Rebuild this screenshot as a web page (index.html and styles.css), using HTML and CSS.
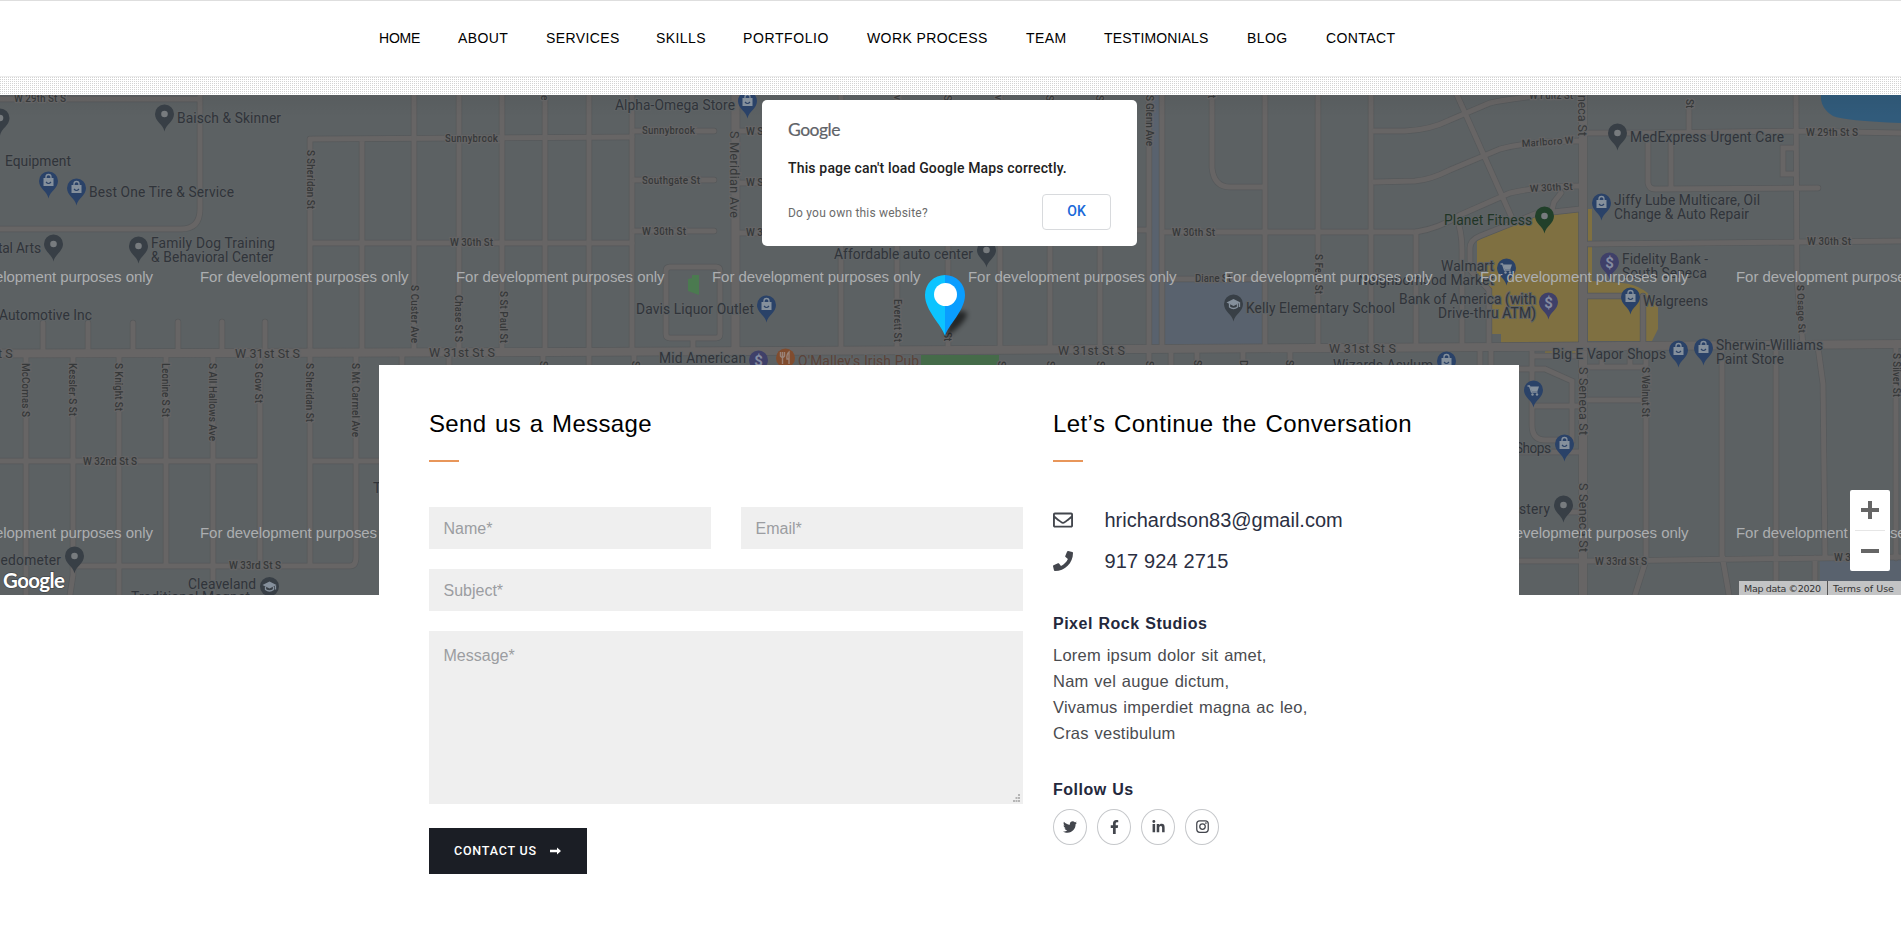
FILE: index.html
```html
<!DOCTYPE html>
<html lang="en">
<head>
<meta charset="utf-8">
<title>Contact</title>
<link rel="stylesheet" href="styles.css">
</head>
<body>
<header class="header">
  <nav class="nav">
    <a class="tight">HOME</a><a>ABOUT</a><a>SERVICES</a><a>SKILLS</a><a class="wide">PORTFOLIO</a><a>WORK PROCESS</a><a>TEAM</a><a class="snug">TESTIMONIALS</a><a>BLOG</a><a>CONTACT</a>
  </nav>
</header>
<div class="dots"></div>
<section class="map">
<svg class="map-canvas" viewBox="0 95 1901 500" width="1901" height="500">
  <defs>
    <path id="pin" d="M0 17.5C-1.2 10.500-9.500 7.500-9.500 0A9.500 9.500 0 0 1 9.500 0C9.500 7.500 1.200 10.500 0 17.500Z"/>
    <g id="dot"><use href="#pin"/><circle r="3.300" class="hole"/></g>
    <g id="bag"><use href="#pin"/><path class="glyph" d="M-5-3H5V5H-5Z"/><path class="gline" d="M-2.500-3V-4A2.500 2.500 0 0 1 2.500-4V-3"/><path class="smile" d="M-2.500 1Q0 4 2.500 1"/></g>
    <g id="cart"><use href="#pin"/><path class="gline" d="M-6-4H-4L-2 2H4"/><path class="glyph" d="M-3.500-3.500H5.500L4 1H-2Z"/><circle class="glyph" cx="-1" cy="4.500" r="1.200"/><circle class="glyph" cx="3.500" cy="4.500" r="1.200"/></g>
    <g id="bank"><use href="#pin"/><text class="dollar" x="0" y="5.500">$</text></g>
    <g id="cap"><path class="glyph" d="M0-5L7-1.500 0 2-7-1.500Z"/><path class="gline" d="M-4 0V3Q0 6 4 3V0M6-1V3"/></g>
    <linearGradient id="shade" x1="0" x2="0" y1="0" y2="1"><stop offset="0" stop-color="#000" stop-opacity=".05"/><stop offset="1" stop-color="#000" stop-opacity="0"/></linearGradient>
    <filter id="soft" x="-50%" y="-50%" width="200%" height="200%"><feGaussianBlur stdDeviation="2.500"/></filter>
    <g id="lines">
      <path d="M0 99H200M200 95V209Q200 229 181 229H0M312 139L632 137M310 139V350M362 140V352M310 243H632M43 323V352M88 323V352M133 323V352M178 322V352M222 322V352M265 322V352"/>
      <path d="M414 95V350M459 95V350M502 95V350M545 95V350M589 95V350M632 95V350M841 95V350M897 95V350M948 95V350M1000 95V350M1050 95V350M1100 95V350M1149 95V350M1162 95V350M1050 230H1149"/>
      <path d="M634 131H714M634 180H714M634 231H714M738 131H770M738 183H770M738 233H770M670 267H716Q720 267 720 271V334Q720 338 716 338H670Q666 338 666 334V271Q666 267 670 267ZM693 338V350"/>
      <path d="M1212 95V168Q1214 187 1230 187H1264M1265 95V346M1318 95V346M1371 95V346M1416 232V346M1165 279H1265M1165 232H1416"/>
      <path d="M1374 131H1405Q1430 130 1450 120L1490 103Q1510 98 1578 92M1374 182L1415 181Q1430 180 1450 170L1500 149Q1530 141 1580 141M1416 232Q1440 228 1460 215L1510 193Q1540 186 1580 186M1457 95L1511 216M1456 217Q1462 230 1462 250V346M1489 346V290L1470 270V248Q1470 240 1480 236L1535 214 1580 209M1552 210L1554 202 1561 193"/>
      <path d="M1583 133H1650L1797 131 1901 133M1689 105V131M1648 143V183Q1649 189 1655 189L1818 188M1671 143V188M1796 95L1797 280 1803 345M1796 148H1783V174H1796M1588 244L1797 242 1901 241M1587 296H1634M1643 296V345"/>
      <path d="M26 355V595M73 355V575L70 595M119 355V595M166 355V565M213 355V595M260 355V563M310 350V564M356 355V557Q356 566 350 566H75M0 461H257M311 461H379M402 352V365M449 352V365M543 352V365M589 352V365M634 352V365M1171 350V365M1197 350V365M1243 350V365M1290 350V365M1480 350V365M1491 350V365M1149 350V365"/>
      <path d="M1646 347V560L1635 595M1722 347V555L1729 595M1776 347V595M1818 347L1823 384 1825 558M1896 347V558M1500 561H1600L1901 557M1532 350V425Q1532 440 1545 440H1572V381L1545 369H1500M1532 406H1583M1588 400H1645M1588 367H1645M1519 452H1583M1815 558V595M1533 356H1583M1563 512H1583M1602 355V367M1630 355V367"/>
    </g>
    <g id="mains"><path d="M0 353.500L560 352 960 350 1500 347 1901 344M735.500 95V350M1583 95V595"/></g>
  </defs>
  <rect class="land" y="95" width="1901" height="500"/>
  <path class="school" d="M1165 279H1264V346H1165ZM1820 560H1901V595H1820ZM1149 95H1163V346H1149Z"/>
  <path class="park" d="M921 355H999V365H921Z"/>
  <path class="park bright" d="M688 279L692 278V275H699V295L688 291Z"/>
  <path class="water" d="M1821 95Q1820 108 1833 116 1845 121 1901 123V95Z"/>
  <path class="mall" d="M1477 240L1520 218 1555 212H1579V343H1501V334H1492V290H1484V277H1477ZM1588 209H1592V281L1622 283Q1646 285 1658 306V329L1652 341H1588ZM1545 351H1583V355H1545Z"/>
  <use href="#lines" class="edge"/><use href="#mains" class="edge big"/>
  <use href="#lines" class="road"/><use href="#mains" class="road big"/>
  <rect y="95" width="1901" height="22" fill="url(#shade)"/>

  <g class="st">
    <text x="14" y="102" textLength="52">W 29th St S</text><text x="445" y="142" textLength="53">Sunnybrook</text><text x="450" y="246" textLength="43">W 30th St</text>
    <text x="642" y="134" textLength="53">Sunnybrook</text><text x="642" y="184" textLength="58">Southgate St</text><text x="642" y="235" textLength="44">W 30th St</text>
    <text x="746" y="135">W S</text><text x="746" y="186">W S</text><text x="746" y="236">W 3</text>
    <text x="1172" y="236" textLength="43">W 30th St</text><text x="1195" y="282" textLength="36">Diane St</text>
    <text x="1529" y="99" textLength="44">W Fultz St</text><text transform="translate(1522 147) rotate(-4)" textLength="52">Marlboro W</text><text transform="translate(1530 192) rotate(-3)" textLength="43">W 30th St</text>
    <text x="1806" y="136" textLength="52">W 29th St S</text><text x="1807" y="245" textLength="44">W 30th St</text>
    <text x="83" y="465" textLength="54">W 32nd St S</text><text x="229" y="569" textLength="52">W 33rd St S</text><text x="1595" y="565" textLength="52">W 33rd St S</text><text x="1834" y="561">W 3</text>
    <text transform="translate(307 150) rotate(90)" textLength="59">S Sheridan St</text>
    <text transform="translate(411 285) rotate(90)" textLength="58">S Custer Ave</text><text transform="translate(455 295) rotate(90)" textLength="47">Chase St S</text><text transform="translate(500 291) rotate(90)" textLength="52">S St Paul St</text>
    <text transform="translate(541 95) rotate(90)">e</text><text transform="translate(894 299) rotate(90)" textLength="43">Everett St</text><text transform="translate(944 332) rotate(90)">St</text>
    <text transform="translate(1146 95) rotate(90)" textLength="51">S Glenn Ave</text><text transform="translate(1208 95) rotate(90)">t</text><text transform="translate(1315 254) rotate(90)" textLength="40">S Fern St</text>
    <text transform="translate(1686 99) rotate(90)">St</text><text transform="translate(1797 285) rotate(88)" textLength="48">S Osage St</text><text transform="translate(1893 353) rotate(90)" textLength="44">S Silver St</text>
    <text transform="translate(22 363) rotate(90)" textLength="54">McComas S</text><text transform="translate(69 363) rotate(90)" textLength="53">Kessler S St</text><text transform="translate(115 363) rotate(90)" textLength="48">S Knight St</text><text transform="translate(162 363) rotate(90)" textLength="54">Leonine S St</text><text transform="translate(209 363) rotate(90)" textLength="78">S All Hallows Ave</text><text transform="translate(255 363) rotate(90)" textLength="40">S Gow St</text><text transform="translate(306 363) rotate(90)" textLength="59">S Sheridan St</text><text transform="translate(352 363) rotate(90)" textLength="74">S Mt Carmel Ave</text>
    <text transform="translate(1642 367) rotate(90)" textLength="50">S Walnut St</text>
    <text transform="translate(894 95) rotate(90)">v</text><text transform="translate(944 95) rotate(90)">S</text><text transform="translate(995 95) rotate(90)">v</text><text transform="translate(1046 95) rotate(90)">S</text><text transform="translate(1096 95) rotate(90)">S</text>
    <text transform="translate(540 361) rotate(90)">S</text><text transform="translate(632 361) rotate(90)">S</text><text transform="translate(998 361) rotate(90)">S</text><text transform="translate(1047 361) rotate(90)">S</text><text transform="translate(1097 361) rotate(90)">S</text><text transform="translate(1146 361) rotate(90)">S</text><text transform="translate(1194 360) rotate(90)">S</text><text transform="translate(1240 360) rotate(90)">D</text><text transform="translate(1286 360) rotate(90)">S</text>
  </g>
  <g class="st av">
    <text x="-2" y="358">t S</text><text x="235" y="358" textLength="65">W 31st St S</text><text x="429" y="357" textLength="66">W 31st St S</text><text x="1058" y="355" textLength="67">W 31st St S</text><text x="1329" y="353" textLength="67">W 31st St S</text>
    <text transform="translate(730 131) rotate(90)" textLength="87">S Meridian Ave</text><text transform="translate(1578 95) rotate(90)" textLength="41">neca St</text><text transform="translate(1579 367) rotate(90)" textLength="68">S Seneca St</text><text transform="translate(1579 483) rotate(90)" textLength="69">S Seneca St</text>
  </g>
  <g class="poi">
    <text x="177" y="123" textLength="104">Baisch &amp; Skinner</text><text x="5" y="166" textLength="66">Equipment</text><text x="89" y="197" textLength="145">Best One Tire &amp; Service</text><text x="-2" y="253" textLength="43">tal Arts</text><text x="151" y="248" textLength="124">Family Dog Training</text><text x="151" y="262" textLength="122">&amp; Behavioral Center</text><text x="-1" y="320" textLength="93">Automotive Inc</text>
    <text x="615" y="110" textLength="120">Alpha-Omega Store</text><text x="636" y="314" textLength="118">Davis Liquor Outlet</text><text x="659" y="363" textLength="87">Mid American</text><text x="834" y="259" textLength="139">Affordable auto center</text><text x="1246" y="313" textLength="149">Kelly Elementary School</text><text x="1333" y="370" textLength="100">Wizards Asylum</text>
    <text x="1441" y="271" textLength="53">Walmart</text><text x="1358" y="285" textLength="136">Neighborhood Market</text><text x="1399" y="304" textLength="137">Bank of America (with</text><text x="1438" y="318" textLength="98">Drive-thru ATM)</text>
    <text x="1630" y="142" textLength="154">MedExpress Urgent Care</text><text x="1614" y="205" textLength="146">Jiffy Lube Multicare, Oil</text><text x="1614" y="219" textLength="135">Change &amp; Auto Repair</text><text x="1622" y="264" textLength="86">Fidelity Bank -</text><text x="1622" y="278" textLength="85">South Seneca</text><text x="1643" y="306" textLength="65">Walgreens</text><text x="1552" y="359" textLength="114">Big E Vapor Shops</text><text x="1716" y="350" textLength="107">Sherwin-Williams</text><text x="1716" y="364" textLength="68">Paint Store</text>
    <text x="1515" y="453" textLength="36">Shops</text><text x="1519" y="514" textLength="31">stery</text><text x="-7" y="565" textLength="68">eedometer</text><text x="188" y="589" textLength="68">Cleaveland</text><text x="131" y="602" textLength="119">Traditional Magnet</text><text x="373" y="493">T</text>
    <text x="798" y="366" textLength="121" class="food">O'Malley's Irish Pub</text><text x="1444" y="225" textLength="88" class="fit">Planet Fitness</text>
  </g>
  <g class="gray">
    <use href="#dot" x="0" y="118"/><use href="#dot" x="164.500" y="114"/><use href="#dot" x="53.500" y="244"/><use href="#dot" x="138.500" y="246"/><use href="#dot" x="986.500" y="250"/><use href="#dot" x="1617.500" y="133"/><use href="#dot" x="1563.500" y="505"/><use href="#dot" x="74.500" y="556"/>
    <use href="#pin" x="1233.500" y="304"/><use href="#cap" x="1233.500" y="304"/><circle cx="269.500" cy="586.500" r="9.500"/><use href="#cap" x="269.500" y="586.500"/>
  </g>
  <use href="#dot" class="green" x="1544.500" y="216"/>
  <g class="blue">
    <use href="#bag" x="48.500" y="181"/><use href="#bag" x="76.500" y="188"/><use href="#bag" x="747.500" y="101"/><use href="#bag" x="766.500" y="305"/><use href="#bag" x="1446.500" y="361"/><use href="#bag" x="1601.500" y="203"/><use href="#bag" x="1630.500" y="297"/><use href="#bag" x="1678.500" y="350"/><use href="#bag" x="1703.500" y="348"/><use href="#bag" x="1564.500" y="444"/><use href="#cart" x="1506.500" y="268"/><use href="#cart" x="1533.500" y="390"/>
  </g>
  <g class="violet"><use href="#bank" x="758.500" y="360"/><use href="#bank" x="1548.500" y="302"/><use href="#bank" x="1609.500" y="262"/></g>
  <circle class="orange" cx="785.500" cy="358" r="9.500"/><path class="fork" d="M780.500 352V356Q782.500 359 784.500 356V352M782.500 352V364M789 364V352Q786.500 354 787 359H789"/>

  <g class="mark">
    <text x="-55.500" y="282" textLength="208.500">For development purposes only</text><text x="200" y="282" textLength="208.500">For development purposes only</text><text x="456" y="282" textLength="208.500">For development purposes only</text><text x="712" y="282" textLength="208.500">For development purposes only</text><text x="968" y="282" textLength="208.500">For development purposes only</text><text x="1224" y="282" textLength="208.500">For development purposes only</text><text x="1480" y="282" textLength="208.500">For development purposes only</text><text x="1736" y="282" textLength="208.500">For development purposes only</text>
    <text x="-55.500" y="538" textLength="208.500">For development purposes only</text><text x="200" y="538" textLength="208.500">For development purposes only</text><text x="1480" y="538" textLength="208.500">For development purposes only</text><text x="1736" y="538" textLength="208.500">For development purposes only</text>
  </g>
  <path d="M945 335L952 316Q960 308 967 313 967 322 947 336Z" opacity=".6" filter="url(#soft)"/>
  <path fill="#0cc4ff" d="M945 336C942 325 925 311 925 295A20 20 0 0 1 945 275Z"/><path fill="#0a9dff" d="M945 336C948 325 965 311 965 295A20 20 0 0 0 945 275Z"/><circle cx="945.500" cy="294.500" r="11.500" fill="#fff"/>
  <text class="glogo" x="3" y="588" textLength="62">Google</text>
</svg>
<div class="dialog">
  <div class="dialog-logo">Google</div>
  <div class="dialog-title">This page can't load Google Maps correctly.</div>
  <div class="dialog-row"><span class="dialog-link">Do you own this website?</span><button class="ok">OK</button></div>
</div>
<div class="zoom"><span class="plus"></span><i></i><span class="minus"></span></div>
<div class="attribution"><span>Map data ©2020</span><span>Terms of Use</span></div>
</section>

<main class="card">
  <form class="form">
    <h2>Send us a Message</h2>
    <div class="fields">
      <input class="field" placeholder="Name*"><input class="field" placeholder="Email*">
      <input class="field full" placeholder="Subject*">
      <div class="area full"><textarea class="field" placeholder="Message*"></textarea>
        <svg class="grip" width="7" height="9" viewBox="0 0 7 9"><path d="M5 0h2v2H5zM2.500 3h2v2h-2zM5 3h2v2H5zM0 6h2v2H0zM2.500 6h2v2h-2zM5 6h2v2H5z" fill="#b5b5b5"/></svg></div>
    </div>
    <button class="submit" type="button">CONTACT US<svg width="11" height="8" viewBox="0 0 11 8"><path d="M0 2.800H7V.5L11 4 7 7.500V5.200H0Z" fill="#fff"/></svg></button>
  </form>
  <aside class="info">
    <h2 class="second">Let’s Continue the Conversation</h2>
    <div class="line"><svg width="20" height="20" viewBox="0 0 512 512"><path d="M464 64H48C21.500 64 0 85.500 0 112v288c0 26.500 21.500 48 48 48h416c26.500 0 48-21.500 48-48V112c0-26.500-21.500-48-48-48zm0 48v40.800c-22.400 18.300-58.200 46.700-134.600 106.500-16.800 13.200-50.200 45.100-73.400 44.700-23.200.4-56.600-31.500-73.400-44.700C106.200 199.500 70.400 171.100 48 152.800V112h416zM48 400V214.400c22.900 18.300 55.400 43.900 104.900 82.600 21.900 17.200 60.100 55.200 103.100 55 42.700.2 80.500-37.200 103.100-54.900 49.500-38.800 82-64.400 104.900-82.700V400H48z"/></svg><span>hrichardson83@gmail.com</span></div>
    <div class="line"><svg width="20" height="20" viewBox="0 0 512 512"><path d="M493.400 24.600l-104-24c-11.300-2.600-22.900 3.300-27.500 13.900l-48 112c-4.200 9.800-1.400 21.300 6.900 28l60.600 49.600c-36 76.700-98.900 140.500-177.200 177.200l-49.600-60.600c-6.800-8.300-18.200-11.100-28-6.900l-112 48C3.900 366.500-2 378.100.6 389.400l24 104C27.100 504.200 36.700 512 48 512c256.100 0 464-207.500 464-464 0-11.200-7.700-20.900-18.600-23.400z"/></svg><span class="tel">917 924 2715</span></div>
    <h3>Pixel Rock Studios</h3>
    <p>Lorem ipsum dolor sit amet,<br>Nam vel augue dictum,<br>Vivamus imperdiet magna ac leo,<br>Cras vestibulum</p>
    <h3 class="follow">Follow Us</h3>
    <div class="social">
      <a><svg width="14" height="14" viewBox="0 0 512 512"><path d="M459.400 151.700c.3 4.500.3 9.100.3 13.600 0 138.700-105.600 298.600-298.600 298.600-59.500 0-114.700-17.200-161.100-47.100 8.400 1 16.600 1.300 25.300 1.300 49.100 0 94.200-16.600 130.300-44.800-46.100-1-84.800-31.200-98.100-72.800 6.500 1 13 1.600 19.800 1.600 9.400 0 18.800-1.300 27.600-3.600-48.100-9.700-84.100-52-84.100-103v-1.300c14 7.800 30.200 12.700 47.400 13.300-28.300-18.800-46.800-51-46.800-87.400 0-19.500 5.200-37.400 14.300-53 51.700 63.700 129.300 105.300 216.400 109.800-1.600-7.800-2.600-15.900-2.600-24 0-57.800 46.800-104.900 104.900-104.900 30.200 0 57.500 12.700 76.700 33.100 23.700-4.500 46.500-13.300 66.600-25.300-7.800 24.400-24.400 44.800-46.100 57.800 21.100-2.300 41.600-8.100 60.400-16.200-14.300 20.800-32.200 39.300-52.600 54.300z"/></svg></a>
      <a><svg width="9" height="14" viewBox="0 0 320 512"><path d="M279 288l14-92.700h-89V135c0-25.300 12.500-50 52.300-50H297V6.300S260 0 225 0C151.700 0 104 44.400 104 124.700v70.600H22.900V288H104v224h100V288z"/></svg></a>
      <a><svg width="13" height="14" viewBox="0 0 448 512"><path d="M100.300 448H7.400V149h92.900zM53.800 108.100C24.100 108.100 0 83.500 0 53.800a53.800 53.800 0 0 1 107.600 0c0 29.700-24.100 54.300-53.800 54.300zM448 448h-92.700V302.400c0-34.700-.7-79.200-48.300-79.200-48.300 0-55.700 37.700-55.700 76.700V448h-92.800V149h89.100v40.800h1.300c12.400-23.500 42.700-48.300 87.900-48.300 94 0 111.300 61.900 111.300 142.300V448z"/></svg></a>
      <a><svg width="13" height="13" viewBox="0 0 26 26" fill="none" stroke="#43464d" stroke-width="2.500"><rect x="1.500" y="1.500" width="23" height="23" rx="6"/><circle cx="13" cy="13" r="5.500"/><circle cx="19.800" cy="6.200" r=".6"/></svg></a>
    </div>
  </aside>
</main>
</body>
</html>
```
FILE: styles.css
```css
* { box-sizing: border-box; }
body { margin: 0; background: #fff; font-family: "Liberation Sans", Arial, sans-serif; overflow: hidden; height: 925px; }
.header { height: 77px; border-top: 1px solid #dedede; border-bottom: 1px solid #ededed; background: #fff; }
.nav { display: grid; grid-template-columns: 79px 88px 110px 87px 124px 159px 78px 143px 79px 80px; padding: 29px 0 0 379px; }
.nav a { font-size: 14px; line-height: 16px; letter-spacing: .4px; color: #000; white-space: nowrap; }
.nav .wide { letter-spacing: .6px; }
.nav .tight { letter-spacing: -.2px; }
.nav .snug { letter-spacing: .15px; }
.dots { height: 18px; background: linear-gradient(90deg, transparent 1px, #fff 1px) 0 0 / 2px 2px, linear-gradient(#d3d3d3 1px, #fff 1px) 0 0 / 2px 2px; }
.map { position: relative; height: 500px; overflow: hidden; }
.map-canvas { display: block; font-family: Roboto, sans-serif; }
.land { fill: #5c6163; }
.school { fill: #59626e; }
.park { fill: #456b49; }
.park.bright { fill: #4b7a50; }
.water { fill: #315b7b; }
.mall { fill: #7f7041; }
.edge { fill: none; stroke: #56595b; stroke-width: 6.4px; stroke-linecap: round; }
.road { fill: none; stroke: #676565; stroke-width: 5px; stroke-linecap: round; }
.edge.big { stroke-width: 9.5px; }
.road.big { stroke-width: 8.2px; }
.map-canvas text { paint-order: stroke; }
.st { font-size: 10px; fill: #363839; stroke: #646465; stroke-width: 2.5px; font-weight: 500; }
.av { font-size: 12.5px; font-weight: 400; }
.poi { font-size: 13.8px; fill: #30343a; stroke: #5f6365; stroke-width: 2px; }
.poi .food { fill: #5a4238; }
.poi .fit { fill: #1f3526; }
.hole { fill: #777b7e; }
.glyph { fill: #85909c; }
.gline { fill: none; stroke: #85909c; stroke-width: 1.3px; }
.smile { fill: none; stroke: #2b4266; stroke-width: 1.2px; }
.gray { fill: #383f46; }
.blue { fill: #2a4268; }
.green { fill: #21402a; }
.violet { fill: #3f4069; }
.orange { fill: #804c2e; }
.map-canvas .dollar { font-size: 15px; font-weight: 700; text-anchor: middle; fill: #858ba0; stroke: none; }
.fork { fill: none; stroke: #9a8378; stroke-width: 1.4px; }
.mark { font: 15px "Liberation Sans", Arial, sans-serif; fill: #acaeb0; }
.glogo { font: 700 20.5px Lato, sans-serif; fill: #fff; stroke: #44484b; stroke-width: 1.5px; }
.dialog { position: absolute; left: 762px; top: 5px; width: 375px; height: 146px; padding: 18px 26px 0; background: #fff; border-radius: 5px; font-family: Roboto, sans-serif; }
.dialog-logo { font: 17.5px/24px Lato, sans-serif; color: #5f6368; letter-spacing: -.5px; -webkit-text-stroke: .2px #5f6368; }
.dialog-title { margin-top: 18px; font-size: 14px; line-height: 16px; font-weight: 500; letter-spacing: .16px; color: #212121; white-space: nowrap; }
.dialog-row { display: flex; justify-content: space-between; align-items: flex-start; margin-top: 18px; }
.dialog-link { margin-top: 11px; font-size: 12px; line-height: 16px; color: #6b6b6b; letter-spacing: .2px; }
.ok { width: 69px; height: 36px; padding: 0 0 2px; border: 1px solid #d8dadd; border-radius: 4px; background: #fff; color: #1a69d9; font: 500 14px Roboto, sans-serif; }
.zoom { position: absolute; left: 1850px; top: 395px; width: 40px; height: 81px; padding: 0 5px; background: #fff; border-radius: 2px; display: flex; flex-direction: column; align-items: center; justify-content: space-between; }
.zoom span { width: 18px; height: 40px; background: linear-gradient(#666, #666) center / 18px 4px no-repeat; }
.zoom .plus { background: linear-gradient(#666, #666) center / 18px 4px no-repeat, linear-gradient(#666, #666) center / 4px 18px no-repeat; }
.zoom i { width: 30px; height: 1px; background: #e6e6e6; }
.attribution { position: absolute; left: 1739px; top: 486px; width: 162px; height: 14px; display: flex; font: 9.5px/15px "DejaVu Sans", sans-serif; color: #333; white-space: nowrap; letter-spacing: -.32px; }
.attribution span { background: #c3c4c5; padding-left: 5px; }
.attribution span:first-child { width: 89px; border-right: 1px solid #555; }
.attribution span:last-child { width: 73px; letter-spacing: 0; }
.card { position: relative; width: 1140px; height: 560px; margin: -230px 0 0 379px; padding: 0 50px; background: #fff; display: grid; grid-template-columns: 594px 1fr; column-gap: 30px; }
h2 { margin: 44px 0 0; font-size: 24px; line-height: 30px; font-weight: 400; letter-spacing: .35px; word-spacing: 1.6px; color: #000; white-space: nowrap; }
.second { letter-spacing: .42px; }
h2::after { content: ""; display: block; width: 30px; height: 2px; margin-top: 21px; background: #e8965a; }
.fields { margin-top: 45px; display: grid; grid-template-columns: 282px 282px; gap: 20px 30px; }
.full { grid-column: 1 / -1; }
.field { width: 100%; height: 42px; padding: 2px 15px 0 14.5px; border: 0; border-radius: 0; background: #efefef; font: 16px "Liberation Sans", Arial, sans-serif; display: block; resize: none; }
.field::placeholder { color: #9b9da1; opacity: 1; }
.area { position: relative; height: 173px; }
.area .field { height: 173px; padding-top: 16px; }
.grip { position: absolute; right: 3px; bottom: 1px; }
.submit { display: flex; align-items: center; width: 158px; height: 46px; margin-top: 24px; padding: 0 0 1px 25px; border: 0; background: #1b1e25; color: #fff; font: 500 12.5px Roboto, sans-serif; letter-spacing: .8px; white-space: nowrap; }
.submit svg { margin-left: 13px; }
.line { display: flex; align-items: center; height: 41px; }
h2 + .line { margin-top: 38px; }
.line svg { fill: #43464d; margin-top: -1px; }
.line span { margin-left: 31.5px; font-size: 20px; color: #2b2f42; }
.line .tel { letter-spacing: .15px; }
h3 { margin: 32px 0 0; font-size: 16px; line-height: 20px; color: #24283c; letter-spacing: .5px; word-spacing: .7px; }
p { margin: 8px 0 0; font-size: 16.5px; line-height: 26px; letter-spacing: .22px; word-spacing: 1px; color: #4a4b4f; white-space: nowrap; }
.follow { margin-top: 34px; }
.social { display: flex; gap: 10px; margin-top: 9px; }
.social a { width: 34px; height: 36px; padding-bottom: 1px; border: 1px solid #c6c8cb; border-radius: 50%; display: flex; align-items: center; justify-content: center; fill: #43464d; }
```
